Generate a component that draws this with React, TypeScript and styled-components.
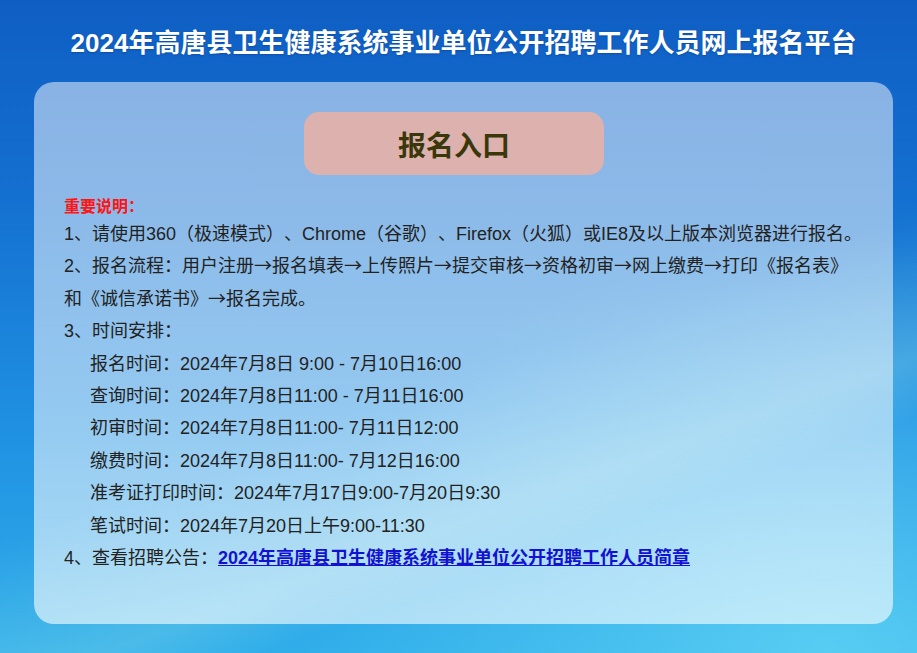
import React from "react";
import styled, { createGlobalStyle } from "styled-components";

const GlobalStyle = createGlobalStyle`
  html, body {
    margin: 0;
    padding: 0;
  }
  body {
    width: 917px;
    height: 653px;
    overflow: hidden;
    font-family: "Liberation Sans", "Noto Sans CJK SC", sans-serif;
    text-spacing-trim: space-all;
    background:
      linear-gradient(160deg, rgba(255,255,255,0) 55%, rgba(200,255,230,0.18) 70%, rgba(255,255,255,0) 76%),
      radial-gradient(ellipse at 90% 100%, rgba(120,230,250,0.55) 0%, rgba(120,230,250,0) 45%),
      linear-gradient(180deg, #0f5ec4 0%, #1470d0 30%, #1f90e2 65%, #30aeea 100%);
  }
`;

const Page = styled.div`
  display: flex;
  flex-direction: column;
  height: 653px;
`;

const Title = styled.h1`
  margin: 0;
  padding: 28px 0 0 10px;
  height: 54px;
  box-sizing: border-box;
  text-align: center;
  color: #ffffff;
  font-size: 26px;
  line-height: 30px;
  font-weight: bold;
  text-shadow: 0 1px 2px rgba(0, 40, 110, 0.35);
`;

const Card = styled.div`
  margin: 28px 0 0 34px;
  width: 859px;
  height: 542px;
  box-sizing: border-box;
  border-radius: 20px;
  background: linear-gradient(180deg, rgba(255,255,255,0.5) 0%, rgba(255,255,255,0.52) 60%, rgba(255,255,255,0.6) 100%);
  padding: 30px 0 0 30px;
  display: flex;
  flex-direction: column;
`;

const EntryButton = styled.a`
  margin-left: 240px;
  width: 300px;
  height: 63px;
  border-radius: 15px;
  background: #dcb1ae;
  color: #3a380b;
  font-size: 28px;
  font-weight: bold;
  display: flex;
  align-items: center;
  justify-content: center;
  text-decoration: none;
  cursor: pointer;
`;

const Notice = styled.div`
  margin-top: 22px;
  color: #222222;
  font-size: 18px;
  white-space: nowrap;
`;

const NoticeTitle = styled.div`
  color: #ff1414;
  font-size: 16px;
  font-weight: bold;
  line-height: 20px;
  margin-bottom: 1px;
`;

const Line = styled.div<{ $indent?: boolean }>`
  line-height: 32.4px;
  height: 32.4px;
  padding-left: ${(p) => (p.$indent ? "26px" : "0")};
`;

const Arrow = styled.span`
  font-family: "Noto Sans CJK SC", sans-serif;
  line-height: 0;
`;

const Link = styled.a`
  color: #1212d0;
  font-weight: bold;
  text-decoration: underline;
`;

const schedule = [
  "报名时间：2024年7月8日 9:00 - 7月10日16:00",
  "查询时间：2024年7月8日11:00 - 7月11日16:00",
  "初审时间：2024年7月8日11:00- 7月11日12:00",
  "缴费时间：2024年7月8日11:00- 7月12日16:00",
  "准考证打印时间：2024年7月17日9:00-7月20日9:30",
  "笔试时间：2024年7月20日上午9:00-11:30",
];

const flow = ["用户注册", "报名填表", "上传照片", "提交审核", "资格初审", "网上缴费", "打印《报名表》"];

export default function App() {
  return (
    <>
      <GlobalStyle />
      <Page>
        <Title>2024年高唐县卫生健康系统事业单位公开招聘工作人员网上报名平台</Title>
        <Card>
          <EntryButton>报名入口</EntryButton>
          <Notice>
            <NoticeTitle>重要说明：</NoticeTitle>
            <Line>1、请使用360（极速模式）、Chrome（谷歌）、Firefox（火狐）或IE8及以上版本浏览器进行报名。</Line>
            <Line>
              2、报名流程：
              {flow.map((step, i) => (
                <React.Fragment key={step}>
                  {i > 0 && <Arrow>→</Arrow>}
                  {step}
                </React.Fragment>
              ))}
            </Line>
            <Line>
              和《诚信承诺书》<Arrow>→</Arrow>报名完成。
            </Line>
            <Line>3、时间安排：</Line>
            {schedule.map((s) => (
              <Line key={s} $indent>
                {s}
              </Line>
            ))}
            <Line>
              4、查看招聘公告：<Link>2024年高唐县卫生健康系统事业单位公开招聘工作人员简章</Link>
            </Line>
          </Notice>
        </Card>
      </Page>
    </>
  );
}
